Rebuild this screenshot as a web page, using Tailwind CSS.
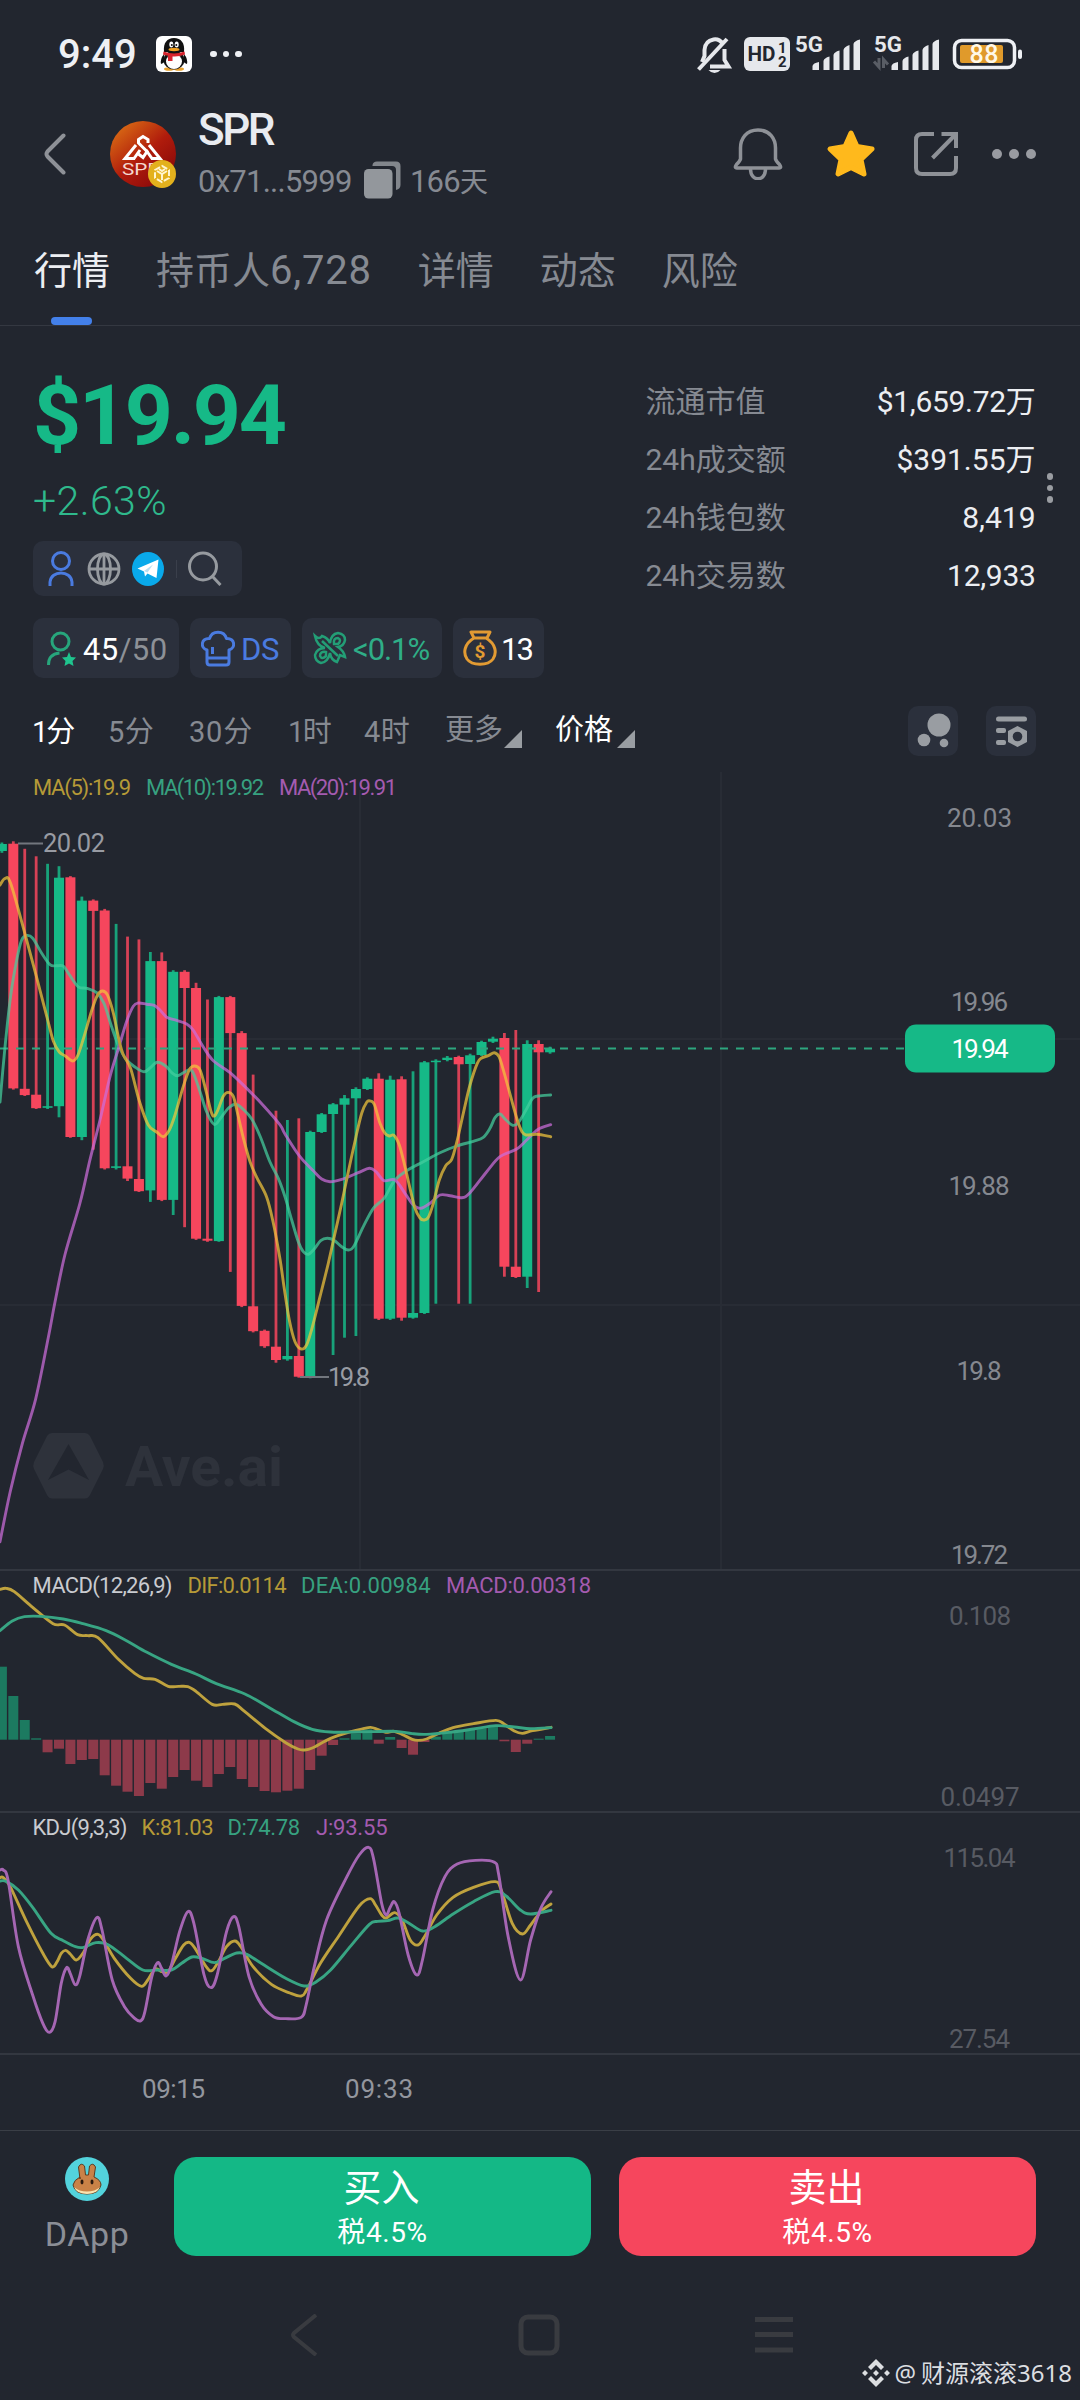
<!DOCTYPE html>
<html lang="zh-CN">
<head>
    <meta charset="UTF-8">
    <meta name="viewport" content="width=1080">
    <title>SPR 行情</title>
    <script src="https://cdn.jsdelivr.net/npm/@tailwindcss/browser@4"></script>
</head>
<body class="w-[1080px] h-[2400px] overflow-hidden bg-[#22262f] text-[#868a92] font-['Roboto','Noto_Sans_CJK_SC',sans-serif]">

<!-- 系统状态栏 -->
<div class="h-[108px] pl-[58px] pr-[55px] flex justify-between items-center text-[#eef0f4]">
    <div class="flex items-center">
        <span class="text-[40px] leading-none font-medium w-[98px] pt-[2px]">9:49</span>
        <svg class="w-9 h-9" viewBox="0 0 36 36">
            <rect width="36" height="36" rx="6" fill="#fff"/>
            <ellipse cx="13" cy="33" rx="5" ry="1.8" fill="#e9a12c"/>
            <ellipse cx="23" cy="33" rx="5" ry="1.8" fill="#e9a12c"/>
            <path d="M8 18Q4 23 5 28Q7 28 9 25M28 18Q32 23 31 28Q29 28 27 25" fill="#111"/>
            <ellipse cx="18" cy="24" rx="10.5" ry="9.5" fill="#111"/>
            <ellipse cx="18" cy="25.5" rx="8" ry="7.5" fill="#fff"/>
            <path d="M8 16C7 7 11 2 18 2s11 5 10 14z" fill="#111"/>
            <ellipse cx="15.3" cy="8.5" rx="2" ry="3" fill="#fff"/><ellipse cx="20.7" cy="8.5" rx="2" ry="3" fill="#fff"/>
            <circle cx="15.8" cy="9" r="1" fill="#111"/><circle cx="20.3" cy="9" r="1" fill="#111"/>
            <ellipse cx="18" cy="13.5" rx="5.5" ry="1.7" fill="#f0a020"/>
            <path d="M7.500 15.500Q18 19.500 28.500 15.500L29 18.500Q23 21 16.500 20.500V25H12V19.800Q9 19.500 7 18.500z" fill="#d8232c"/>
        </svg>
        <div class="ml-[18px] flex gap-[6px]">
            <i class="size-[6.5px] rounded-full bg-[#eef0f4]"></i>
            <i class="size-[6.5px] rounded-full bg-[#eef0f4]"></i>
            <i class="size-[6.5px] rounded-full bg-[#eef0f4]"></i>
        </div>
    </div>
    <svg class="w-[329px] h-[60px]" viewBox="696 24 329 60">
        <!-- 静音 -->
        <g fill="none" stroke="#e6e8ec" stroke-width="4">
            <path d="M723 44Q719 38.500 713.500 39.500Q705 41 704.500 50V56L702 62M710 66.500H728.500L724.500 60V49"/>
            <path d="M698.500 69.500L727 39"/>
        </g>
        <path d="M708.500 70H720.500Q718 73 714.500 73T708.500 70z" fill="#e6e8ec"/>
        <!-- HD -->
        <rect x="744" y="37" width="46" height="34" rx="6" fill="#e6e8ec"/>
        <g fill="#22262f" font-weight="700">
            <text x="747.500" y="61" font-size="20" textLength="28" lengthAdjust="spacingAndGlyphs">HD</text>
            <text x="778" y="52.500" font-size="15">1</text>
            <text x="778" y="66.500" font-size="15">2</text>
        </g>
        <g fill="#e6e8ec" font-size="22" font-weight="700">
            <text x="795" y="52" textLength="28" lengthAdjust="spacingAndGlyphs">5G</text>
            <text x="874" y="52" textLength="28" lengthAdjust="spacingAndGlyphs">5G</text>
        </g>
        <g id="signal" fill="#e6e8ec">
            <path d="M812.500 66Q813 63 819 62V70H812.500zM823.500 61Q824 58 829.500 56.500V70H823.500zM833.500 55Q834 52 839.500 50.500V70H833.500zM843.500 50Q844 47 849.500 45V70H843.500zM853.500 44Q854 41 860 39.500V70H853.500z"/>
        </g>
        <use href="#signal" x="79"/>
        <path d="M879 58V67L874 61.500M883.500 68V59.500L888 64.500" fill="none" stroke="#595d65" stroke-width="3"/>
        <!-- 电池 -->
        <rect x="954.500" y="40.500" width="60" height="27" rx="7" fill="none" stroke="#eef0f4" stroke-width="3.500"/>
        <rect x="960" y="45" width="43" height="18" rx="2" fill="#e09a2b"/>
        <rect x="1018" y="49.500" width="4" height="9.500" rx="2" fill="#eef0f4"/>
        <text x="969.500" y="63" font-size="25" font-weight="500" fill="#fff8e8" textLength="29">88</text>
    </svg>
</div>

<!-- 顶部导航 -->
<div class="h-[112px] flex items-center justify-between pl-[44px] pr-[44px]">
    <div class="flex items-center -mt-[20px]">
        <svg class="w-[22px] h-[42px]" viewBox="0 0 22 42" fill="none" stroke="#8e9197" stroke-width="4" stroke-linecap="round" stroke-linejoin="round">
            <path d="M19.500 2.500L3.500 18.500Q1.500 21 3.500 23.500L19.500 39.500"/>
        </svg>
        <svg class="ml-[44px] w-[66px] h-[68px]" viewBox="0 0 66 68">
            <defs>
                <linearGradient id="spr" x1="0.1" y1="0.1" x2="0.8" y2="0.9">
                    <stop offset="0" stop-color="#d96a14"/><stop offset="0.55" stop-color="#b01c0c"/><stop offset="1" stop-color="#8c0a0a"/>
                </linearGradient>
            </defs>
            <circle cx="33" cy="34" r="33" fill="url(#spr)"/>
            <!-- 山形标志 -->
            <g fill="none" stroke="#fff" stroke-width="3">
                <path d="M26 25L15 38.500H24L30 30M39 25L50 38.500H42L36 30"/>
                <path d="M38 23V19.500L33 16.500L28.500 19.500V23L37 31.500L33 37.500L28.500 34"/>
            </g>
            <text x="12" y="55" font-size="16" fill="#f5d8d0" textLength="38" lengthAdjust="spacingAndGlyphs">SPR</text>
            <circle cx="52" cy="54" r="14" fill="#e3b11d"/>
            <g fill="none" stroke="#fff5d0" stroke-width="2">
                <path d="M52 46L59 50V58L52 62L45 58V50z" stroke-dasharray="6 2"/>
                <path d="M47 51L52 54L57 51M52 54V60M49 49L52 51L55 49"/>
            </g>
        </svg>
        <div class="ml-[22px] pt-[2px]">
            <div class="-mt-[3px] text-[44px] leading-[50px] text-[#e9ebf0] tracking-[-2.5px] font-medium">SPR</div>
            <div class="mt-[3px] flex items-center h-[44px] text-[31px]">
                <span class="w-[165px] pt-[5px] tracking-[-0.75px]">0x71...5999</span>
                <svg class="w-[38px] h-[38px]" viewBox="0 0 38 38">
                    <path d="M9.500 4Q10 0.500 14 0.500H33Q37.500 0.500 37.500 5V24Q37.500 28 33 29V9Q33 5 29 5H9.500z" fill="#82868c"/>
                    <rect x="1" y="8" width="28.500" height="29.500" rx="4.500" fill="#93979c"/>
                </svg>
                <span class="ml-[9px] pt-[4px] tracking-[-0.8px]">166<span class="text-[28px]">天</span></span>
            </div>
        </div>
    </div>
    <div class="flex items-center -mt-[20px] gap-[43px]">
        <svg class="w-[50px] h-[52px]" viewBox="0 0 50 52" fill="none" stroke="#8e9197" stroke-width="3.500" stroke-linejoin="round">
            <path d="M25 2C13 2 7.500 11 7.500 20V31Q7 33 3.500 36.500Q1 40 4 40H46Q49 40 46.500 36.500Q43 33 42.500 31V20C42.500 11 37 2 25 2z"/>
            <path d="M17.500 41C17.500 54 32.500 54 32.500 41"/>
        </svg>
        <svg class="w-[50px] h-[50px]" viewBox="0 0 50 50">
            <path d="M25 4L31 17.500L46 20L35 30.500L38 45L25 38.500L12 45L15 30.500L4 20L19 17.500z" fill="#ffb91c" stroke="#ffb91c" stroke-width="5" stroke-linejoin="round"/>
        </svg>
        <svg class="-ml-[5px] w-[44px] h-[44px]" viewBox="0 0 44 44" fill="none" stroke="#8e9197" stroke-width="4">
            <path d="M20 2H8Q2 2 2 8V36Q2 42 8 42H36Q42 42 42 36V24"/>
            <path d="M27.500 2H42V16M42 2L18.500 26"/>
        </svg>
        <div class="-ml-[9px] flex gap-[7px]">
            <i class="size-[10px] rounded-full bg-[#999ba1]"></i>
            <i class="size-[10px] rounded-full bg-[#999ba1]"></i>
            <i class="size-[10px] rounded-full bg-[#999ba1]"></i>
        </div>
    </div>
</div>

<!-- 标签页 -->
<div class="h-[106px] border-b border-[#343841] pl-[34px] flex gap-[46px] text-[38px] leading-[102px]">
    <div class="relative text-[#eceef2]">行情
        <i class="absolute left-[17px] bottom-0 w-[41px] h-[8px] rounded-full bg-[#4380ea]"></i>
    </div>
    <div>持币人<span class="text-[40px] tracking-[0.8px]">6,728</span></div>
    <div>详情</div>
    <div>动态</div>
    <div>风险</div>
</div>

<!-- 价格信息 -->
<div class="h-[374px] flex justify-between">
    <div class="pl-[33px] pt-[44px]">
        <div class="text-[84px] leading-[92px] font-bold text-[#16b987] tracking-[-2.3px]">$19.94</div>
        <div class="mt-[14px] text-[41px] leading-[50px] text-[#2fb98c] font-light tracking-[0.4px]">+2.63%</div>
        <div class="mt-[15px] w-[209px] h-[55px] rounded-[10px] bg-[#2b303c] flex items-center pl-[15px]">
            <svg class="w-[26px] h-[35px]" viewBox="0 0 26 35" fill="none" stroke="#4a7be0" stroke-width="3">
                <circle cx="13" cy="10" r="8.500"/>
                <path d="M2 35V31C3 19 23 19 24 31V35"/>
            </svg>
            <svg class="ml-[13px] w-[34px] h-[34px]" viewBox="0 0 34 34" fill="none" stroke="#969a9f" stroke-width="2.800">
                <circle cx="17" cy="17" r="15"/>
                <ellipse cx="17" cy="17" rx="6.500" ry="15"/>
                <path d="M2 17H32M17 2V32"/>
            </svg>
            <svg class="ml-[11px] w-[32px] h-[34px]" viewBox="0 0 32 34">
                <ellipse cx="16" cy="17" rx="16" ry="17" fill="#09a9ea"/>
                <path d="M5.500 16.500L26.500 7.500L24.500 26L15.500 21.500L13 24.500L12 19.500z" fill="#fff"/>
                <path d="M12 19L21 12.500L15.500 20.500" fill="#b9dff2"/>
            </svg>
            <i class="ml-[12px] w-px h-[18px] bg-[#3a3f4b]"></i>
            <svg class="ml-[11px] w-[34px] h-[35px]" viewBox="0 0 34 35" fill="none" stroke="#969a9f" stroke-width="3">
                <circle cx="15" cy="15.500" r="13.500"/>
                <path d="M24.500 25.500L32.500 34"/>
            </svg>
        </div>
        <div class="mt-[22px] flex gap-[11px] text-[31px] leading-[60px] h-[60px]">
            <div class="w-[146px] rounded-[10px] bg-[#2b303c] flex items-center pl-[14px]">
                <svg class="w-[30px] h-[35px]" viewBox="0 0 30 35" fill="none" stroke="#27a67c" stroke-width="3">
                    <circle cx="13.500" cy="10.500" r="8.500"/>
                    <path d="M1.500 34Q1.500 23 12.500 22"/>
                    <path d="M22 21L24 26L29 26.500L25.500 30L26.500 35L22 32.500L17.500 35L18.500 30L15 26.500L20 26z" fill="#1fc48e" stroke="none"/>
                </svg>
                <span class="ml-[6px] pt-[3px] text-white tracking-[0.4px]">45<span class="text-[#8d9197]">/50</span></span>
            </div>
            <div class="w-[101px] rounded-[10px] bg-[#2b303c] flex items-center pl-[11px] text-[#4a7be0]">
                <svg class="w-[34px] h-[37px]" viewBox="0 0 34 37" fill="none" stroke="#4a7be0" stroke-width="3" stroke-linejoin="round">
                    <path d="M6 27V20C-1 18 0 8 8.500 8.500C11 0 23 0 25.500 8.500C34 8 35 18 28 20V32Q28 35 25 35H9Q6 35 6 32V27zM6 28H28M11.500 17V24"/>
                </svg>
                <span class="ml-[6px] pt-[3px] tracking-[-0.4px]">DS</span>
            </div>
            <div class="w-[140px] rounded-[10px] bg-[#2b303c] flex items-center pl-[11px] text-[#2fae87]">
                <svg class="w-[34px] h-[34px]" viewBox="0 0 34 34" fill="none" stroke="#239e76" stroke-width="2.500">
                    <path d="M2 5Q6 9 9 5Q15 7 17 12Q18 3 25 2Q32 3 32 9Q31 15 25 16Q31 20 32 26L27 24L24 31Q18 29 17 22Q15 31 8 32Q2 30 2 24Q4 17 12 17Q4 15 2 5z"/>
                    <path d="M9 10L25 25M21 13Q20 7 25 7Q29 9 25 13zM13 21Q7 20 7 25Q9 29 13 25z"/>
                </svg>
                <span class="ml-[6px] pt-[3px] tracking-[-1.1px]">&lt;0.1%</span>
            </div>
            <div class="w-[91px] rounded-[10px] bg-[#2b303c] flex items-center pl-[10px]">
                <svg class="w-[34px] h-[36px]" viewBox="0 0 34 36" fill="none" stroke="#e29b33" stroke-width="3" stroke-linejoin="round">
                    <path d="M8 2H27L24 8H11zM11 8C1 14 0 23 4 29C9 36 25 36 30 29C34 23 33 14 23 8"/>
                    <text x="11.500" y="28" font-size="19" font-weight="700" fill="#e29b33" stroke="none">$</text>
                </svg>
                <span class="ml-[4px] pt-[3px] text-white tracking-[-1.8px]">13</span>
            </div>
        </div>
    </div>
    <div class="flex items-start pt-[47px] pr-[27px]">
        <div class="w-[390px] text-[30px] leading-[58px]">
            <div class="flex justify-between"><span>流通市值</span><span class="text-[#eceef2] tracking-[-0.3px]">$1,659.72万</span></div>
            <div class="flex justify-between"><span>24h成交额</span><span class="text-[#eceef2]">$391.55万</span></div>
            <div class="flex justify-between"><span>24h钱包数</span><span class="text-[#eceef2]">8,419</span></div>
            <div class="flex justify-between"><span>24h交易数</span><span class="text-[#eceef2] tracking-[-0.3px]">12,933</span></div>
        </div>
        <div class="ml-[11px] mt-[100px] flex flex-col gap-[5px]">
            <i class="size-[6.5px] rounded-full bg-[#9a9da2]"></i>
            <i class="size-[6.5px] rounded-full bg-[#9a9da2]"></i>
            <i class="size-[6.5px] rounded-full bg-[#9a9da2]"></i>
        </div>
    </div>
</div>

<!-- 周期切换 -->
<div class="h-[65px] pl-[32px] pr-[44px] pb-[3px] flex items-center justify-between text-[29px]">
    <div class="flex h-[60px] leading-[62px]">
        <span class="w-[76px] text-white tracking-[-2px]">1分</span>
        <span class="w-[81px] tracking-[0.5px]">5分</span>
        <span class="w-[99px] tracking-[0.8px]">30分</span>
        <span class="w-[76px] tracking-[-1.5px]">1时</span>
        <span class="w-[81px] tracking-[0.5px]">4时</span>
        <span class="w-[110px] flex items-end">更多
            <svg class="ml-[1px] mb-[13px] w-[18px] h-[18px]" viewBox="0 0 18 18"><path d="M18 0V18H0z" fill="#999da2"/></svg>
        </span>
        <span class="flex items-end text-white">价格
            <svg class="ml-[4px] mb-[13px] w-[18px] h-[18px]" viewBox="0 0 18 18"><path d="M18 0V18H0z" fill="#999da2"/></svg>
        </span>
    </div>
    <div class="flex gap-[28px]">
        <svg class="w-[50px] h-[50px]" viewBox="0 0 50 50" fill="#999da2">
            <rect width="50" height="50" rx="10" fill="#2b303c"/>
            <circle cx="31" cy="19" r="11.500"/><circle cx="16" cy="34" r="6.300"/><circle cx="36" cy="37" r="4.300"/>
        </svg>
        <svg class="w-[50px] h-[50px]" viewBox="0 0 50 50" fill="#999da2">
            <rect width="50" height="50" rx="10" fill="#2b303c"/>
            <rect x="10" y="10.500" width="31" height="5" rx="2.500"/>
            <rect x="10" y="22" width="10" height="5" rx="2"/>
            <rect x="10" y="34" width="10" height="5" rx="2"/>
            <path d="M31.500 20L41 25V36L31.500 41L22 36V25z"/>
            <circle cx="31.500" cy="30.500" r="4.800" fill="#2b303c"/>
        </svg>
    </div>
</div>

<!-- K线 / MACD / KDJ -->
<svg class="block w-[1080px] h-[1365px]" viewBox="0 765 1080 1365" fill="none">
    <g stroke="#282c35" stroke-width="2">
        <path d="M360 790V1569M721 772V1569M0 1039H1080M0 1305H1080"/>
    </g>
    <g stroke="#333740" stroke-width="2">
        <path d="M0 1570H1080M0 1812H1080M0 2054H1080"/>
    </g>

    <!-- 水印 -->
    <g fill="#2e323b">
        <path fill-rule="evenodd" d="M52 1433H85Q88 1433 90 1436L103 1462Q104.500 1465.500 103 1469L90 1495Q88 1498.500 85 1498.500H52Q49 1498.500 47 1495L34 1469Q32.500 1465.500 34 1462L47 1436Q49 1433 52 1433zM68.500 1444L48 1480L68.500 1469.500L89 1480z"/>
        <text x="125" y="1485.500" font-size="55" font-weight="700" textLength="158" lengthAdjust="spacingAndGlyphs">Ave.ai</text>
    </g>

    <g id="candles"></g>
    <path d="M0 1048.500H905" stroke="#2da67f" stroke-width="2" stroke-dasharray="8 8"/>
    <g id="ma" stroke-width="2.900" stroke-linecap="round" opacity="0.72"></g>
    <g id="macd-bars"></g>
    <g id="indicators" stroke-width="2.900" stroke-linecap="round"></g>

    <path d="M18 843.500H43M300 1377H329" stroke="#72767e" stroke-width="2"/>
    <g fill="#989ba3" font-size="25.500">
        <text x="43" y="852" textLength="62">20.02</text>
        <text x="328" y="1385.500" textLength="42">19.8</text>
    </g>

    <!-- 指标图例 -->
    <g font-size="22">
        <text x="33" y="795" fill="#b59a37" textLength="98">MA(5):19.9</text>
        <text x="146" y="795" fill="#37a180" textLength="118">MA(10):19.92</text>
        <text x="279" y="795" fill="#a45bb0" textLength="118">MA(20):19.91</text>

        <text x="32.500" y="1592.500" fill="#c9cbd0" textLength="140">MACD(12,26,9)</text>
        <text x="187.500" y="1592.500" fill="#b59a37" textLength="99">DIF:0.0114</text>
        <text x="301" y="1592.500" fill="#37a180" textLength="129.500">DEA:0.00984</text>
        <text x="446" y="1592.500" fill="#a45bb0" textLength="145">MACD:0.00318</text>

        <text x="32.500" y="1835" fill="#c9cbd0" textLength="95">KDJ(9,3,3)</text>
        <text x="141.500" y="1835" fill="#b59a37" textLength="72">K:81.03</text>
        <text x="227.500" y="1835" fill="#37a180" textLength="72.500">D:74.78</text>
        <text x="316" y="1835" fill="#a45bb0" textLength="71.500">J:93.55</text>
    </g>

    <!-- 价格轴 -->
    <g fill="#85888f" font-size="26" text-anchor="middle">
        <text x="979.500" y="826.500" textLength="65">20.03</text>
        <text x="979.500" y="1010.500" textLength="57">19.96</text>
        <text x="979" y="1195" textLength="61">19.88</text>
        <text x="979" y="1380" textLength="45">19.8</text>
        <text x="979.500" y="1564" textLength="57">19.72</text>
    </g>
    <g fill="#585b63" font-size="26" text-anchor="middle">
        <text x="980" y="1625" textLength="62">0.108</text>
        <text x="980" y="1806" textLength="79">0.0497</text>
        <text x="979.500" y="1867" textLength="72">115.04</text>
        <text x="979.500" y="2048" textLength="61">27.54</text>
    </g>
    <rect x="905" y="1024.500" width="150" height="48" rx="11" fill="#16b987"/>
    <text x="980" y="1057.500" font-size="26" text-anchor="middle" fill="#fff" textLength="57">19.94</text>

    <g fill="#93969e" font-size="26">
        <text x="142" y="2098" textLength="63">09:15</text>
        <text x="345" y="2098" textLength="68">09:33</text>
    </g>
</svg>

<!-- 底部操作栏 -->
<div class="h-[160px] border-t border-[#3a3e46] flex items-start pt-[26px] pl-[43px]">
    <div class="w-[88px] flex flex-col items-center">
        <svg class="w-[44px] h-[44px]" viewBox="0 0 44 44">
            <circle cx="22" cy="22" r="22" fill="#53d3dc"/>
            <g fill="#c98247" stroke="#5c3a1e" stroke-width="1">
                <path d="M15 22L13.500 10Q16 5 19.500 9L20.500 18H23.500L24.500 9Q28 5 30.500 10L29 20Q36 23 36 28Q34 37 22 37T8 28Q9 23 15 20z"/>
            </g>
            <path d="M9 30Q12 37 22 37T35 30Q30 34.500 22 34.500T9 30z" fill="#fae3b0"/>
            <ellipse cx="17" cy="25" rx="1.500" ry="2.400" fill="#2a1a10"/><ellipse cx="27" cy="25" rx="1.500" ry="2.400" fill="#2a1a10"/>
        </svg>
        <span class="mt-[13px] text-[34px] leading-[40px] text-[#8b8e96] tracking-[0.6px]">DApp</span>
    </div>
    <div class="ml-[43px] flex gap-[28px] text-white text-center">
        <div class="w-[417px] h-[99px] rounded-[22px] bg-[#14b886]">
            <div class="pt-[7px] pr-[2px] text-[38px] leading-[48px]">买入</div>
            <div class="text-[28px] leading-[42px] tracking-[0.6px]">税4.5%</div>
        </div>
        <div class="w-[417px] h-[99px] rounded-[22px] bg-[#f6465d]">
            <div class="pt-[7px] pr-[2px] text-[38px] leading-[48px]">卖出</div>
            <div class="text-[28px] leading-[42px] tracking-[0.6px]">税4.5%</div>
        </div>
    </div>
</div>

<!-- 系统导航键 -->
<div class="relative h-[110px]">
    <div class="flex pt-[24px] pl-[290px]">
        <svg class="w-[28px] h-[42px]" viewBox="0 0 28 42" fill="none" stroke="#393b40" stroke-width="4">
            <path d="M26 1L4 19Q2 21 4 23L26 41"/>
        </svg>
        <svg class="ml-[200px] w-[42px] h-[42px]" viewBox="0 0 42 42" fill="none" stroke="#393b40" stroke-width="5">
            <rect x="3" y="3" width="36" height="36" rx="7"/>
        </svg>
        <svg class="ml-[195px] w-[38px] h-[42px]" viewBox="0 0 38 42" stroke="#393b40" stroke-width="5">
            <path d="M0 5.500H38M0 20.500H38M0 36H38"/>
        </svg>
    </div>
    <div class="absolute right-[8px] top-[65px] flex items-center gap-[5px] text-[#dcdee1] text-[24px] leading-[36px] font-['Noto_Sans','Noto_Sans_CJK_SC',sans-serif]">
        <svg class="w-[28px] h-[28px]" viewBox="0 0 28 28" fill="#dcdee1">
            <path d="M14 0L22 8L19 11L14 6L9 11L6 8zM14 28L22 20L19 17L14 22L9 17L6 20zM3 11L6 14L3 17L0 14zM25 11L28 14L25 17L22 14zM14 11L17 14L14 17L11 14z"/>
        </svg>
        <span>@<span class="ml-[5px]">财源滚滚3618</span></span>
    </div>
</div>

<script>
    const UP = '#16b987', DOWN = '#f6465d';
    const STEP = 11.42, FIRST = 1.9;

    // 方向, 最高, 实体上沿, 实体下沿, 最低
    const candles = [
        [1, 842.5, 844, 851, 852.8], [0, 841.3, 843.7, 1088.4, 1089.6], [0, 848.8, 1088.8, 1095.1, 1096], [0, 856.3, 1094.7, 1108.2, 1109],
        [1, 863.8, 1106.2, 1107.8, 1109], [1, 866.2, 877.7, 1106.2, 1117.3], [0, 876.1, 877.3, 1137, 1137.8], [1, 896.6, 900.6, 1137, 1140.2],
        [0, 899.4, 900.6, 910.9, 1149.7], [0, 908.9, 910.5, 1168.3, 1169.5], [1, 923.9, 1166.3, 1167.9, 1169.5], [0, 936.6, 1166.3, 1178.6, 1181],
        [0, 939.4, 1179, 1191.2, 1192], [1, 952, 961.1, 1190.4, 1201.9], [0, 952.4, 961.1, 1199.9, 1201.1], [1, 970.2, 971.8, 1199.9, 1215],
        [0, 970.2, 971.8, 988, 1227.2], [0, 982.8, 988, 1238.7, 1239.9], [0, 999.5, 1238.7, 1240.7, 1241.8], [1, 995.9, 997.1, 1241.1, 1241.8],
        [0, 995.9, 997.1, 1033.1, 1271.9], [0, 1031.1, 1033.1, 1305.9, 1307.1], [0, 1074.6, 1306.3, 1331.2, 1332.4], [0, 1329.6, 1330.8, 1346.2, 1347.8],
        [0, 1110.7, 1346.7, 1360, 1362.7], [1, 1120, 1356, 1359.3, 1360.7], [0, 1118.3, 1356, 1376.7, 1377.7], [1, 1130.7, 1132, 1376.7, 1378.3],
        [1, 1113, 1114.3, 1132, 1133], [1, 1103, 1104.3, 1114, 1355], [1, 1095, 1098.3, 1104.7, 1337.7], [1, 1087.3, 1089, 1098.3, 1336],
        [1, 1077.3, 1078.7, 1089, 1090], [0, 1073.3, 1078.7, 1318.7, 1320], [1, 1075.7, 1079.7, 1318.7, 1320], [0, 1076.3, 1079.3, 1317.7, 1320.7],
        [1, 1071.3, 1313, 1317.7, 1318.7], [1, 1061, 1062.3, 1313, 1314], [1, 1059.3, 1060.7, 1061.7, 1303.7], [1, 1056, 1057.7, 1060, 1061.3],
        [0, 1055.7, 1057, 1064.3, 1303.7], [1, 1053.7, 1055.3, 1064, 1303.7], [1, 1040.7, 1042, 1055, 1056], [1, 1036.7, 1038.7, 1041.7, 1043],
        [0, 1033, 1038, 1266.7, 1276.7], [0, 1030, 1266.7, 1277, 1278], [1, 1040.3, 1044, 1276.7, 1288], [0, 1040.3, 1044, 1052.3, 1292],
        [1, 1046.7, 1048.7, 1052.3, 1053.7]
    ];
    document.getElementById('candles').innerHTML = candles.map(([up, hi, top, bottom, lo], i) => {
        const x = FIRST + i * STEP, color = up ? UP : DOWN;
        return `<rect x="${x - 1.4}" y="${hi}" width="2.8" height="${lo - hi}" fill="${color}" opacity="0.85"/>` +
            `<rect x="${x - 5}" y="${top}" width="10" height="${Math.max(bottom - top, 1.5)}" fill="${color}"/>`;
    }).join('');

    // MACD 柱, 正值向上
    const macd = [73, 43.7, 19.7, 1.4, -12.6, -9, -24.3, -20.3, -19.3, -35.6, -46, -52, -56.3, -43.3, -49, -37.3, -30.3, -41, -47.3, -34.3,
        -27.3, -39.3, -47.3, -51.3, -52.6, -51, -49, -30.3, -16, -5.3, 1.4, 6.4, 10.4, -4, 2.7, -8.3, -15, -2.3, 3, 8, 9, 10.4, 11.4, 13.7,
        -1.6, -12.3, -4, 1, 3.7];
    document.getElementById('macd-bars').innerHTML = macd.map((v, i) =>
        `<rect x="${FIRST + i * STEP - 5}" y="${v > 0 ? 1739.7 - v : 1739.7}" width="10" height="${Math.abs(v)}" fill="${v > 0 ? '#1c7a60' : '#8d3a4a'}"/>`
    ).join('');

    // 平滑曲线 (Catmull-Rom 转贝塞尔)
    function curve(str, color, kx = 1, ky = 1, oy = 0) {
        const p = str.trim().split(/\s+/).map(s => s.split(',').map(Number)).map(([x, y]) => [x / kx, y / ky + oy]);
        let d = `M${p[0]}`;
        for (let i = 0; i < p.length - 1; i++) {
            const a = p[i - 1] || p[i], b = p[i], c = p[i + 1], e = p[i + 2] || c;
            d += `C${b[0] + (c[0] - a[0]) / 6},${b[1] + (c[1] - a[1]) / 6} ${c[0] - (e[0] - b[0]) / 6},${c[1] - (e[1] - b[1]) / 6} ${c}`;
        }
        return `<path d="${d}" stroke="${color}"/>`;
    }

    const ma5 = `0,885 5,878.5 10.7,883.6 25,934 36.7,977.7 47.7,1020 53.3,1041 59.3,1052 65.3,1056 72.7,1061 77.7,1055.6 83.3,1039 91.7,1010.5 97.3,995.5 102,991
        107.3,994.7 113.3,1013 119,1040 123.3,1054.8 130.7,1068.7 139.3,1101 148.3,1125 156.7,1132 163.3,1136.7 169.3,1130 175,1115 183.3,1086.4 189.3,1069.8 194.3,1066
        200,1069.8 205.7,1089.6 211,1111.4 214.3,1116 218.3,1109 223.3,1096.3 228,1092.4 233.3,1096.3 237.7,1114 243.3,1137.8 250,1161.6 256.7,1177.4 266.7,1197.2 273.3,1223
        280,1259 284,1286.7 289.3,1320 295,1341.7 301.3,1349 306.7,1344.7 311.7,1329.3 320,1296.7 328.3,1263.3 335,1233.3 341.7,1203.3 348.3,1171.7 356,1136.7 361.7,1113.3
        366.7,1102.3 370,1101 374.3,1104.3 380,1123.3 385,1133.3 389.3,1136 394,1135.3 399.3,1145 405,1166.7 410,1188.3 415,1208.3 420,1218 424,1220 428.3,1217.3 433.3,1203.3
        439.3,1180 445.7,1165.7 451.7,1159.3 457.3,1140 463.3,1113.3 470,1085 477.3,1063.3 481.7,1058 488.3,1055.7 494.3,1052.7 499,1056.7 504.3,1073.3 510.7,1096.7 517.3,1120
        522,1131.7 526,1135 536.7,1134.3 550.7,1136.7`;
    const ma10 = `0,1102 5,1047 10.7,995.5 16.7,960 21.7,940 26.7,935.4 32.7,938.2 41.7,953.2 50,964.7 56.7,965.8 63.3,966.2 70,975.7 78.3,986.8 87.3,988.4 96.7,992.7 104,1003.4
        111.7,1027 119,1047 126.7,1060 135,1067 144,1071.8 150,1068 157.3,1062.3 165.7,1066 171.7,1072.6 177.7,1075.8 185,1071.8 191.7,1070.6 198.3,1086.4 206.7,1112 214.3,1124.4
        220.7,1118 228.3,1108.2 235.7,1104.2 243.3,1109.4 251.7,1119 260,1136 270,1162 278.3,1178.3 285,1196.7 291.7,1220 298.3,1241.7 303.3,1251.7 308.3,1254.3 314,1249.3
        320.7,1240.7 327.3,1238.3 334,1240.3 341.7,1246.7 348.3,1250 354,1246 363.3,1226.7 373.3,1208.3 384,1198.3 395,1180 406.7,1170.7 423.3,1161.7 440,1152.7 456.7,1146
        473.3,1141.3 483.3,1137.3 490,1128.3 495,1117.7 500,1114 506,1120 512.7,1125.3 518.3,1122.7 526,1110 532.7,1098.3 538.3,1096 550.7,1095`;
    const ma20 = `0,1541.7 10.2,1491.7 22.4,1443.3 35.7,1398.8 48.3,1337.5 55,1302 65,1254.5 80,1203 90,1159.6 100,1120 110,1076.6 118.3,1049 126.7,1021.2 133.3,1006.2 138.3,1003
        146.7,1004.2 154.3,1005.4 160,1010 166.7,1017.2 176.7,1020.4 186.7,1024 193.3,1030.3 203.3,1047 213.3,1060.7 230,1072.6 246.7,1088.4 263.3,1105.4 280,1124.8 285,1134
        300,1156.7 313.3,1170.7 321.7,1179 330,1181.7 341.7,1179.3 358.3,1172.7 369.3,1168.3 376,1171.7 384,1180.7 395,1180 405,1193.3 413.3,1205 420.7,1208.3 430,1203.3
        440,1195 450,1195.7 461.7,1197.7 470,1192.7 486.7,1171.7 500,1156.7 516.7,1149 526.7,1140 538.3,1129.3 550.7,1124.7`;
    document.getElementById('ma').innerHTML = curve(ma10, '#45cf9f') + curve(ma20, '#cd6ddb') + curve(ma5, '#f2c63c');

    const dif = `0,628 15,625 35,635 80,682 130,731 158,735 190,764 215,767 240,773 290,838 330,880 352,895 380,898 412,919 438,919 460,920 480,934 520,973 545,973 575,972 600,995
        650,1045 700,1088 730,1107 745,1110 765,1104 810,1075 860,1055 890,1046 908,1042 925,1048 945,1057 965,1054 985,1063 1010,1078 1025,1081 1045,1077 1075,1060 1110,1043
        1160,1031 1215,1021 1235,1032 1260,1053 1280,1060 1305,1052 1350,1042`;
    const dea = `0,752 30,723 60,710 100,709 155,717 200,730 260,752 310,782 360,817 420,853 480,882 530,911 600,942 660,983 720,1025 765,1048 810,1056 860,1056 910,1055 970,1054
        1010,1061 1045,1063 1100,1057 1160,1047 1215,1037 1260,1041 1300,1046 1350,1043`;
    const kLine = `0,263 8,263 25,290 65,395 105,490 127,530 140,515 150,490 161,481 172,492 187,510 203,490 222,447 240,433 255,453 280,505 320,565 347,589 362,570 380,537 397,545
        412,545 430,505 450,465 464,457 478,475 505,530 519,542 535,515 555,470 575,453 590,470 620,530 665,583 710,609 738,618 752,598 785,520 830,438 880,348 907,326 920,345
        935,375 946,384 967,368 985,390 1005,450 1024,465 1040,440 1070,375 1110,322 1160,292 1213,275 1228,300 1255,400 1280,432 1300,405 1325,365 1350,342`;
    const dLine = `0,273 15,274 45,300 80,352 125,430 155,452 185,470 205,472 235,458 265,464 310,505 350,540 385,540 420,540 445,520 470,501 495,505 525,518 550,505 580,489 605,493
        640,520 700,565 745,588 775,575 810,540 860,467 905,403 925,394 950,392 975,384 1000,398 1035,423 1065,410 1110,372 1160,335 1213,305 1240,318 1275,360 1300,372 1350,361`;
    const jLine = `0,240 8,240 20,272 45,470 80,615 105,700 121,727 135,695 150,580 163,533 172,550 184,584 195,560 215,450 237,383 250,420 275,570 305,650 330,685 345,692 355,665
        372,560 386,518 396,535 407,558 420,525 440,425 460,365 475,400 500,555 517,593 532,555 555,425 572,380 585,410 610,560 640,643 670,680 700,686 738,682 750,645 770,530
        800,390 850,260 880,195 903,172 915,205 935,340 946,375 956,352 966,335 978,370 1000,495 1021,555 1035,510 1060,360 1090,260 1120,222 1165,211 1210,216 1222,255 1245,440
        1275,570 1300,450 1325,355 1350,305`;
    document.getElementById('indicators').innerHTML =
        curve(dif, '#bfa23e', 2.45, 3, 1380) + curve(dea, '#38a583', 2.45, 3, 1380) +
        curve(kLine, '#bfa23e', 2.45, 3, 1790) + curve(dLine, '#38a583', 2.45, 3, 1790) + curve(jLine, '#a566b3', 2.45, 3, 1790);
</script>
</body>
</html>
